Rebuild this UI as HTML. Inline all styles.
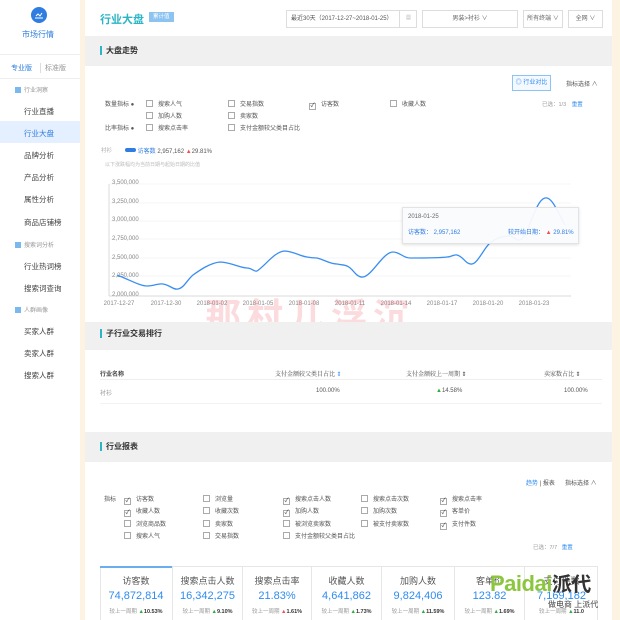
<!DOCTYPE html>
<html><head><meta charset="utf-8"><style>
*{margin:0;padding:0;box-sizing:border-box}
body{width:620px;height:620px;overflow:hidden;background:#fdf3e3;font-family:"Liberation Sans","Noto Sans CJK SC",sans-serif;color:#333;position:relative;font-size:7px}
.a{position:absolute;white-space:nowrap}
.side{position:absolute;left:0;top:0;width:80px;height:620px;background:#fff}
.main{position:absolute;left:85px;top:0;width:527px;height:620px;background:#fff}
.band{position:absolute;left:85px;width:527px;background:#f0f0f0}
.bt{position:absolute;left:100px;font-size:8px;font-weight:bold;color:#333;padding-left:4px;border-left:2px solid #2bb5c5;line-height:9px}
.cb{display:inline-block;width:7px;height:7px;border:1px solid #aaa;vertical-align:-1px;margin-right:5px;background:#fff;font-size:6px;line-height:5px;text-align:center;color:#333}
.nav{position:absolute;left:24px;font-size:7.5px;color:#444}
.grp{position:absolute;left:15px;font-size:6px;color:#999}
.grp i{display:inline-block;width:6px;height:6px;background:#7ab8ee;margin-right:3px;vertical-align:-1px}
.card{position:absolute;top:566px;height:54px;border-right:1px solid #e6e6e6;text-align:center}
.card .t{font-size:9px;color:#555;margin-top:8px}
.card .v{font-size:11px;color:#2f8cf0;margin-top:3px}
.card .c{font-size:5.5px;color:#999;margin-top:5px}
.card .c b{color:#333}
.g{color:#2fae3f}.r{color:#f05050}
</style></head><body>
<div class="side">
 <div class="a" style="left:31px;top:7px;width:16px;height:16px;border-radius:50%;background:#2f7de1"></div>
 <svg class="a" style="left:34px;top:10px" width="10" height="10" viewBox="0 0 10 10"><path d="M1 8h8M2 6l2-2 2 2 2-3" stroke="#fff" fill="none" stroke-width="1"/></svg>
 <div class="a" style="left:22px;top:29px;font-size:8px;color:#2f7de1">市场行情</div>
 <div class="a" style="left:0;top:54px;width:80px;border-top:1px solid #eee"></div>
 <div class="a" style="left:11px;top:63px;font-size:7px;color:#2f7de1">专业版</div>
 <div class="a" style="left:40px;top:63px;font-size:7px;color:#999;border-left:1px solid #ddd;padding-left:4px">标准版</div>
 <div class="a" style="left:0;top:78px;width:80px;border-top:1px solid #eee"></div>
 <div class="grp" style="top:85px"><i></i>行业洞察</div>
 <div class="nav" style="top:106px">行业直播</div>
 <div class="a" style="left:0;top:121px;width:80px;height:22px;background:#e4efff"></div>
 <div class="nav" style="top:128px;color:#2f7de1">行业大盘</div>
 <div class="nav" style="top:150px">品牌分析</div>
 <div class="nav" style="top:172px">产品分析</div>
 <div class="nav" style="top:194px">属性分析</div>
 <div class="nav" style="top:217px">商品店铺榜</div>
 <div class="grp" style="top:240px"><i></i>搜索词分析</div>
 <div class="nav" style="top:261px">行业热词榜</div>
 <div class="nav" style="top:283px">搜索词查询</div>
 <div class="grp" style="top:305px"><i></i>人群画像</div>
 <div class="nav" style="top:326px">买家人群</div>
 <div class="nav" style="top:348px">卖家人群</div>
 <div class="nav" style="top:370px">搜索人群</div>
</div>
<div class="main"></div>
<!-- header -->
<div class="a" style="left:100px;top:11px;font-size:11px;font-weight:bold;color:#2bb5c5">行业大盘</div>
<div class="a" style="left:149px;top:12px;height:10px;padding:0 4px;background:#8cc3f0;color:#fff;font-size:5.5px;line-height:10px">累计值</div>
<div class="a" style="left:286px;top:10px;width:131px;height:18px;border:1px solid #ddd;font-size:6px;color:#555;line-height:16px;padding-left:4px">最近30天（2017-12-27~2018-01-25）</div>
<div class="a" style="left:399px;top:10px;width:18px;height:18px;border-left:1px solid #ddd;font-size:5px;color:#999;text-align:center;line-height:16px">▦</div>
<div class="a" style="left:422px;top:10px;width:96px;height:18px;border:1px solid #ddd;font-size:6px;color:#666;text-align:center;line-height:16px">男装&gt;衬衫 ∨</div>
<div class="a" style="left:523px;top:10px;width:40px;height:18px;border:1px solid #ddd;font-size:6px;color:#666;text-align:center;line-height:16px">所有终端 ∨</div>
<div class="a" style="left:568px;top:10px;width:35px;height:18px;border:1px solid #ddd;font-size:6px;color:#666;text-align:center;line-height:16px">全网 ∨</div>
<div class="band" style="top:36px;height:30px"></div>
<div class="bt" style="top:46px">大盘走势</div>
<div class="a" style="left:512px;top:75px;width:39px;height:16px;border:1px solid #8cc3f0;background:#f3f9ff;font-size:6px;color:#2f8cf0;line-height:14px;text-align:center">◎ 行业对比</div>
<div class="a" style="left:566px;top:79px;font-size:6px;color:#555">指标选择 ∧</div>
<div class="a" style="left:105px;top:99px;font-size:6px;color:#555">数量指标 ●</div>
<div class="a" style="left:105px;top:123px;font-size:6px;color:#555">比率指标 ●</div>
<div class="a" style="left:146px;top:99px;font-size:6px;color:#555"><span class="cb"></span>搜索人气</div>
<div class="a" style="left:146px;top:111px;font-size:6px;color:#555"><span class="cb"></span>加购人数</div>
<div class="a" style="left:146px;top:123px;font-size:6px;color:#555"><span class="cb"></span>搜索点击率</div>
<div class="a" style="left:228px;top:99px;font-size:6px;color:#555"><span class="cb"></span>交易指数</div>
<div class="a" style="left:228px;top:111px;font-size:6px;color:#555"><span class="cb"></span>卖家数</div>
<div class="a" style="left:228px;top:123px;font-size:6px;color:#555"><span class="cb"></span>支付金额较父类目占比</div>
<div class="a" style="left:309px;top:99px;font-size:6px;color:#555"><span class="cb">✓</span>访客数</div>
<div class="a" style="left:390px;top:99px;font-size:6px;color:#555"><span class="cb"></span>收藏人数</div>
<div class="a" style="left:542px;top:100px;font-size:5.5px;color:#999">已选：1/3 <span style="color:#2f8cf0;margin-left:4px">重置</span></div>
<div class="a" style="left:101px;top:146px;font-size:5.5px;color:#aaa">衬衫</div>
<div class="a" style="left:125px;top:146px;font-size:6px;color:#555"><span style="display:inline-block;width:11px;height:4px;border-radius:2px;background:#2f7de1;vertical-align:1px"></span> <span style="color:#2f7de1">访客数</span> 2,957,162 <span class="r">▲</span>29.81%</div>
<div class="a" style="left:105px;top:161px;font-size:5px;color:#bbb">以下涨跌幅均为当前日期与起始日期的比值</div>
<!-- chart -->
<svg class="a" style="left:85px;top:170px" width="527" height="145" viewBox="85 170 527 145">
<g stroke="#eee" stroke-width="0.6">
<line x1="110" y1="184" x2="571" y2="184"/><line x1="110" y1="203" x2="571" y2="203"/><line x1="110" y1="221" x2="571" y2="221"/><line x1="110" y1="239" x2="571" y2="239"/><line x1="110" y1="258" x2="571" y2="258"/><line x1="110" y1="276" x2="571" y2="276"/></g>
<line x1="109" y1="184" x2="109" y2="296" stroke="#ccc" stroke-width="0.7"/>
<line x1="109" y1="296" x2="571" y2="296" stroke="#ccc" stroke-width="0.7"/>
<g font-size="6" fill="#888" font-family="Liberation Sans">
<text x="112" y="184">3,500,000</text><text x="112" y="203">3,250,000</text><text x="112" y="221">3,000,000</text><text x="112" y="240">2,750,000</text><text x="112" y="259">2,500,000</text><text x="112" y="277">2,250,000</text><text x="112" y="296">2,000,000</text></g>
<g font-size="6" fill="#888" font-family="Liberation Sans" text-anchor="middle">
<text x="119" y="305">2017-12-27</text><text x="166" y="305">2017-12-30</text><text x="212" y="305">2018-01-02</text><text x="258" y="305">2018-01-05</text><text x="304" y="305">2018-01-08</text><text x="350" y="305">2018-01-11</text><text x="396" y="305">2018-01-14</text><text x="442" y="305">2018-01-17</text><text x="488" y="305">2018-01-20</text><text x="534" y="305">2018-01-23</text></g>
<path d="M117 275 C130 280 140 286 147 286 C155 286 158 283 163 284 C170 285 173 290 178 289 C184 288 187 280 193 275 C200 270 210 263 220 262 C230 262 240 268 247 268 C252 268 254 272 257 271 C265 266 275 251 285 251 C295 252 300 256 307 257 C312 258 314 258 317 258 C325 260 330 264 337 264 C342 265 345 265 347 266 C353 268 356 278 363 277 C372 276 383 252 393 252 C400 252 403 258 410 258 C425 258 440 258 447 257 C452 257 454 254 457 255 C463 256 466 265 472 264 C478 263 484 248 490 243 C496 238 503 236 510 236 C515 237 516 241 520 240 C528 238 535 200 545 198 C552 196 558 213 565 225" fill="none" stroke="#3a8ef0" stroke-width="1.3"/>
</svg>
<div class="a" style="left:402px;top:207px;width:177px;height:37px;background:rgba(250,251,253,0.95);border:1px solid #e3e3e3;box-shadow:0 1px 3px rgba(0,0,0,0.12)"></div>
<div class="a" style="left:408px;top:214px;font-size:6px;color:#666">2018-01-25</div>
<div class="a" style="left:408px;top:227px;font-size:6px;color:#2f7de1">访客数： 2,957,162</div>
<div class="a" style="left:508px;top:227px;font-size:6px;color:#2f7de1">较开始日期： <span class="r">▲</span> 29.81%</div>
<div class="a" style="left:205px;top:288px;font-size:36px;font-weight:bold;color:rgba(235,90,100,0.22);letter-spacing:6px">那村儿浮沉</div>
<!-- ranking -->
<div class="band" style="top:322px;height:28px"></div>
<div class="bt" style="top:329px">子行业交易排行</div>
<div class="a" style="left:100px;top:369px;font-size:6px;font-weight:bold;color:#444">行业名称</div>
<div class="a" style="left:275px;top:369px;font-size:6px;color:#444;font-family:'Liberation Serif','Noto Serif CJK SC',serif">支付金额较父类目占比 <span style="color:#2f8cf0">⇕</span></div>
<div class="a" style="left:406px;top:369px;font-size:6px;color:#444;font-family:'Liberation Serif','Noto Serif CJK SC',serif">支付金额较上一周期 ⇕</div>
<div class="a" style="left:544px;top:369px;font-size:6px;color:#444;font-family:'Liberation Serif','Noto Serif CJK SC',serif">卖家数占比 ⇕</div>
<div class="a" style="left:100px;top:379px;width:502px;border-top:1px solid #eee"></div>
<div class="a" style="left:100px;top:388px;font-size:6px;color:#999">衬衫</div>
<div class="a" style="left:316px;top:388px;font-size:6px;color:#555">100.00%</div>
<div class="a" style="left:436px;top:388px;font-size:6px;color:#555"><span class="g">▲</span>14.58%</div>
<div class="a" style="left:564px;top:388px;font-size:6px;color:#555">100.00%</div>
<div class="a" style="left:100px;top:403px;width:502px;border-top:1px solid #f3f3f3"></div>
<!-- report -->
<div class="band" style="top:432px;height:30px"></div>
<div class="bt" style="top:442px">行业报表</div>
<div class="a" style="left:526px;top:478px;font-size:6px;color:#555"><span style="color:#2f8cf0">趋势</span> | 报表</div>
<div class="a" style="left:565px;top:478px;font-size:6px;color:#555">指标选择 ∧</div>
<div class="a" style="left:104px;top:494px;font-size:6px;color:#555">指标</div>
<div class="a" style="left:124px;top:494px;font-size:6px;color:#555;line-height:12.3px"><span class="cb">✓</span>访客数<br><span class="cb">✓</span>收藏人数<br><span class="cb"></span>浏览商品数<br><span class="cb"></span>搜索人气</div>
<div class="a" style="left:203px;top:494px;font-size:6px;color:#555;line-height:12.3px"><span class="cb"></span>浏览量<br><span class="cb"></span>收藏次数<br><span class="cb"></span>卖家数<br><span class="cb"></span>交易指数</div>
<div class="a" style="left:283px;top:494px;font-size:6px;color:#555;line-height:12.3px"><span class="cb">✓</span>搜索点击人数<br><span class="cb">✓</span>加购人数<br><span class="cb"></span>被浏览卖家数<br><span class="cb"></span>支付金额较父类目占比</div>
<div class="a" style="left:361px;top:494px;font-size:6px;color:#555;line-height:12.3px"><span class="cb"></span>搜索点击次数<br><span class="cb"></span>加购次数<br><span class="cb"></span>被支付卖家数</div>
<div class="a" style="left:440px;top:494px;font-size:6px;color:#555;line-height:12.3px"><span class="cb">✓</span>搜索点击率<br><span class="cb">✓</span>客单价<br><span class="cb">✓</span>支付件数</div>
<div class="a" style="left:533px;top:543px;font-size:5.5px;color:#999">已选：7/7 <span style="color:#2f8cf0;margin-left:3px">重置</span></div>
<div class="a" style="left:100px;top:566px;width:498px;height:54px;border:1px solid #e6e6e6;border-bottom:none"></div>
<div class="a" style="left:100px;top:566px;width:73px;border-top:2px solid #6aaef0"></div>
<div class="card" style="left:100px;width:73px"><div class="t">访客数</div><div class="v">74,872,814</div><div class="c">较上一周期 <b><span class="g">▲</span>10.53%</b></div></div>
<div class="card" style="left:173px;width:70px"><div class="t">搜索点击人数</div><div class="v">16,342,275</div><div class="c">较上一周期 <b><span class="g">▲</span>9.10%</b></div></div>
<div class="card" style="left:243px;width:69px"><div class="t">搜索点击率</div><div class="v">21.83%</div><div class="c">较上一周期 <b><span class="r">▲</span>1.61%</b></div></div>
<div class="card" style="left:312px;width:70px"><div class="t">收藏人数</div><div class="v">4,641,862</div><div class="c">较上一周期 <b><span class="g">▲</span>1.73%</b></div></div>
<div class="card" style="left:382px;width:73px"><div class="t">加购人数</div><div class="v">9,824,406</div><div class="c">较上一周期 <b><span class="g">▲</span>11.59%</b></div></div>
<div class="card" style="left:455px;width:70px"><div class="t">客单价</div><div class="v">123.82</div><div class="c">较上一周期 <b><span class="g">▲</span>1.69%</b></div></div>
<div class="card" style="left:525px;width:73px;border-right:none"><div class="t">支付件数</div><div class="v">7,169,182</div><div class="c">较上一周期 <b><span class="g">▲</span>11.0</b></div></div>
<div class="a" style="left:490px;top:568px;font-size:22px;font-weight:bold;color:#8cc63e;letter-spacing:-0.5px">Paidai<span style="color:#333;font-size:20px">派代</span></div>
<div class="a" style="left:548px;top:599px;font-size:8px;color:#444">做电商 上派代</div>
</body></html>
